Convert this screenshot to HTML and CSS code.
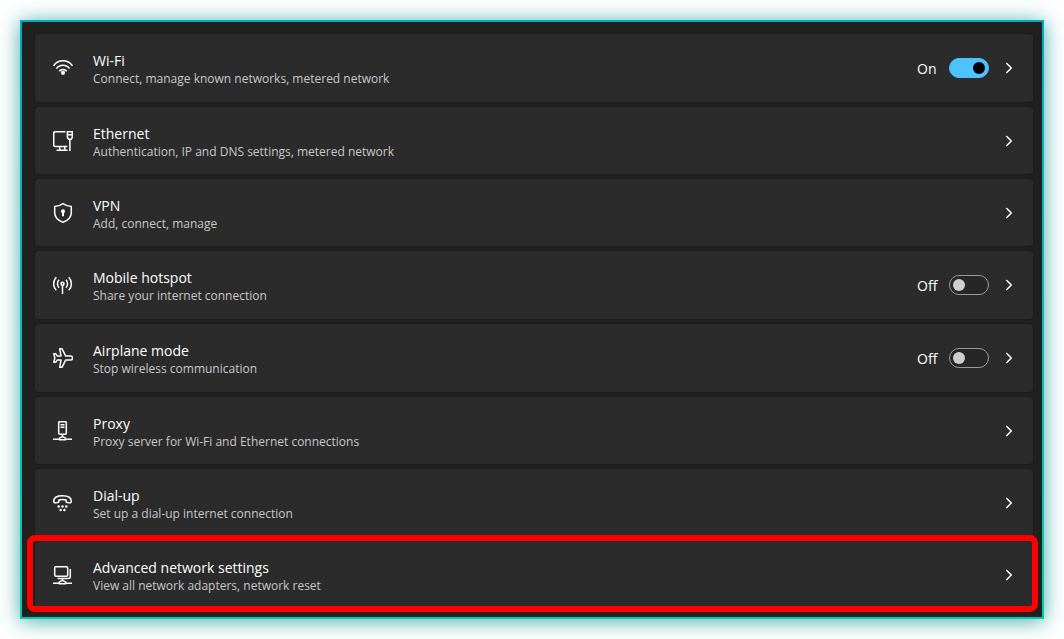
FILE: index.html
```html
<!DOCTYPE html>
<html lang="en">
<head>
<meta charset="utf-8">
<title>Network &amp; internet</title>
<link rel="stylesheet" href="styles.css">
</head>
<body>
<svg class="defs" aria-hidden="true">
  <symbol id="chevron" viewBox="0 0 16 16"><path d="M5.3 3 L10.3 8 L5.3 13"/></symbol>
</svg>
<main class="panel">
  <ul class="list">
    <li class="row row-toggle">
      <a class="link" href="#wifi">
        <svg class="icon" viewBox="0 0 20 20"><path d="M.6 7.8A11.4 11.4 0 0 1 19.4 7.8M3.4 10.6A8.2 8.2 0 0 1 16.6 10.6M6.2 13.3A4.9 4.9 0 0 1 13.8 13.3"/><circle class="solid" cx="10" cy="14.8" r="2.1"/></svg>
        <span class="text"><span class="title">Wi-Fi</span><span class="sub">Connect, manage known networks, metered network</span></span>
      </a>
      <label class="toggle"><span class="state">On</span><input class="switch" type="checkbox" checked></label>
      <button class="more" type="button" aria-label="Open Wi-Fi"><svg class="chevron"><use href="#chevron"/></svg></button>
    </li>
    <li class="row">
      <a class="link" href="#ethernet">
        <svg class="icon" viewBox="0 0 20 20"><path d="M12.5 .7H2.2Q.7.7.7 2.2V14Q.7 15.5 2.2 15.5H14.3M6.7 15.5V19M11.7 15.5V19M3.6 19.3H14.6M14.4.7H19.3V6.2L18.2 8.3H15.5L14.4 6.2ZM14.4 3.8H19.3M16.9 8.3V20"/></svg>
        <span class="text"><span class="title">Ethernet</span><span class="sub">Authentication, IP and DNS settings, metered network</span></span>
      </a>
      <button class="more" type="button" aria-label="Open Ethernet"><svg class="chevron"><use href="#chevron"/></svg></button>
    </li>
    <li class="row">
      <a class="link" href="#vpn">
        <svg class="icon" viewBox="0 0 20 20"><path d="M10 .7Q13.6 3.3 18.3 3.5V9.5Q18.3 16.3 10 19.3Q1.7 16.3 1.7 9.5V3.5Q6.4 3.3 10 .7Z"/><circle class="solid" cx="10" cy="8.2" r="2"/><path class="thick" d="M10 8.5V13.2"/></svg>
        <span class="text"><span class="title">VPN</span><span class="sub">Add, connect, manage</span></span>
      </a>
      <button class="more" type="button" aria-label="Open VPN"><svg class="chevron"><use href="#chevron"/></svg></button>
    </li>
    <li class="row row-toggle">
      <a class="link" href="#hotspot">
        <svg class="icon" viewBox="0 0 20 20"><path d="M3.3 2.2A9.2 9.2 0 0 0 3.3 15.2M15.7 2.2A9.2 9.2 0 0 1 15.7 15.2M6.1 4.8A5.6 5.6 0 0 0 6.1 12.8M12.9 4.8A5.6 5.6 0 0 1 12.9 12.8M9.5 10V19"/><circle cx="9.5" cy="8.7" r="1.5"/></svg>
        <span class="text"><span class="title">Mobile hotspot</span><span class="sub">Share your internet connection</span></span>
      </a>
      <label class="toggle"><span class="state">Off</span><input class="switch" type="checkbox"></label>
      <button class="more" type="button" aria-label="Open Mobile hotspot"><svg class="chevron"><use href="#chevron"/></svg></button>
    </li>
    <li class="row row-toggle">
      <a class="link" href="#airplane">
        <svg class="icon" viewBox="0 0 20 20"><path d="M12.6 7.9H17.6Q19.5 8 19.5 10Q19.5 12 17.6 12.1H12.6L9.1 19.2H6.7L8 12.1H4.2L2.7 14.3H.8L1.8 10L.8 5.7H2.7L4.2 7.9H8L6.7.8H9.1Z"/></svg>
        <span class="text"><span class="title">Airplane mode</span><span class="sub">Stop wireless communication</span></span>
      </a>
      <label class="toggle"><span class="state">Off</span><input class="switch" type="checkbox"></label>
      <button class="more" type="button" aria-label="Open Airplane mode"><svg class="chevron"><use href="#chevron"/></svg></button>
    </li>
    <li class="row">
      <a class="link" href="#proxy">
        <svg class="icon" viewBox="0 0 20 20"><rect x="5.7" y=".7" width="7.6" height="12.6" rx="1"/><path d="M7.5 3.7H11.5M7.5 6.3H11.5M9.5 13.3V15.5M0 18.3H5.5M13.5 18.3H19M9.5 15.6L12.6 17.2V18.8H6.4V17.2Z"/></svg>
        <span class="text"><span class="title">Proxy</span><span class="sub">Proxy server for Wi-Fi and Ethernet connections</span></span>
      </a>
      <button class="more" type="button" aria-label="Open Proxy"><svg class="chevron"><use href="#chevron"/></svg></button>
    </li>
    <li class="row">
      <a class="link" href="#dialup">
        <svg class="icon" viewBox="0 0 20 20"><path d="M.7 8.2Q.7 2.7 9.5 2.7Q18.3 2.7 18.3 8.2Q18.3 10 16.6 9.8L14.3 9.5Q13.1 9.3 13.1 8.2V7Q9.5 5.9 5.9 7V8.2Q5.9 9.3 4.7 9.5L2.4 9.8Q.7 10 .7 8.2Z"/><g class="solid"><circle cx="5.7" cy="13.5" r="1.2"/><circle cx="9.5" cy="13.5" r="1.2"/><circle cx="13.3" cy="13.5" r="1.2"/><circle cx="7.6" cy="17" r="1.2"/><circle cx="11.4" cy="17" r="1.2"/></g></svg>
        <span class="text"><span class="title">Dial-up</span><span class="sub">Set up a dial-up internet connection</span></span>
      </a>
      <button class="more" type="button" aria-label="Open Dial-up"><svg class="chevron"><use href="#chevron"/></svg></button>
    </li>
    <li class="row row-marked">
      <a class="link" href="#advanced">
        <svg class="icon" viewBox="0 0 20 20"><rect x="1.7" y="1.7" width="13" height="9.6" rx="1.2"/><path d="M17.3 4V11.6Q17.3 13.6 15.3 13.6H4.5M9.5 13.6V15.5M0 18.3H5.5M13.5 18.3H19M9.5 15.3L12.8 17.2V18.8H6.2V17.2Z"/></svg>
        <span class="text"><span class="title">Advanced network settings</span><span class="sub">View all network adapters, network reset</span></span>
      </a>
      <button class="more" type="button" aria-label="Open Advanced network settings"><svg class="chevron"><use href="#chevron"/></svg></button>
    </li>
  </ul>
</main>
</body>
</html>
```
FILE: styles.css
```css
* { box-sizing: border-box; }

body {
  margin: 0;
  padding: 20px;
  background: #fff;
  font-family: "Open Sans", "Noto Sans", sans-serif;
  color: #fff;
}

.defs { display: none; }

.panel {
  padding: 12px 9px 9px 13px;
  border: 2px solid transparent;
  background:
    linear-gradient(#202020, #202020) padding-box,
    linear-gradient(#00acc1, #00cdac) border-box;
  box-shadow: 0 2px 20px rgba(0, 140, 140, 0.72);
}

.list {
  display: flex;
  flex-direction: column;
  gap: 5px;
  margin: 0;
  padding: 0;
  list-style: none;
}

.row {
  position: relative;
  display: flex;
  align-items: center;
  min-height: 67px;
  padding: 0 16px 0 18px;
  border-radius: 4px;
  background: #2b2b2b;
  box-shadow: 0 0 0 1px #1d1d1d;
}

.row-toggle { min-height: 68px; }

.row-marked::after {
  content: "";
  position: absolute;
  inset: -6px -5px -4px -8px;
  border: 6px solid #f00;
  border-radius: 8px;
  pointer-events: none;
}

.link {
  display: flex;
  flex: 1;
  align-items: center;
  gap: 20px;
  color: inherit;
  text-decoration: none;
}

.icon {
  flex: none;
  width: 20px;
  height: 20px;
}

.icon,
.chevron {
  fill: none;
  stroke: #fff;
  stroke-width: 1.5;
  stroke-linejoin: round;
}

.solid {
  fill: #fff;
  stroke: none;
}

.thick { stroke-width: 2; }

.text {
  display: flex;
  flex-direction: column;
  padding-top: 4px;
  line-height: 18px;
}

.title { font-size: 14px; }

.sub {
  font-size: 12px;
  color: #c8c8c8;
}

.toggle {
  display: flex;
  align-items: center;
  margin-right: 12px;
  font-size: 14px;
}

.state { width: 32px; }

.switch {
  appearance: none;
  display: flex;
  align-items: center;
  width: 40px;
  height: 20px;
  margin: 0;
  padding: 0 3px;
  border: 1px solid #9a9a9a;
  border-radius: 10px;
  background: #262626;
}

.switch::before {
  content: "";
  width: 12px;
  height: 12px;
  border-radius: 50%;
  background: #cecece;
}

.switch:checked {
  justify-content: flex-end;
  border-color: #4cc2ff;
  background: #4cc2ff;
}

.switch:checked::before { background: #000; }

.more {
  display: flex;
  padding: 0;
  border: 0;
  background: none;
}

.chevron {
  width: 16px;
  height: 16px;
}
```
